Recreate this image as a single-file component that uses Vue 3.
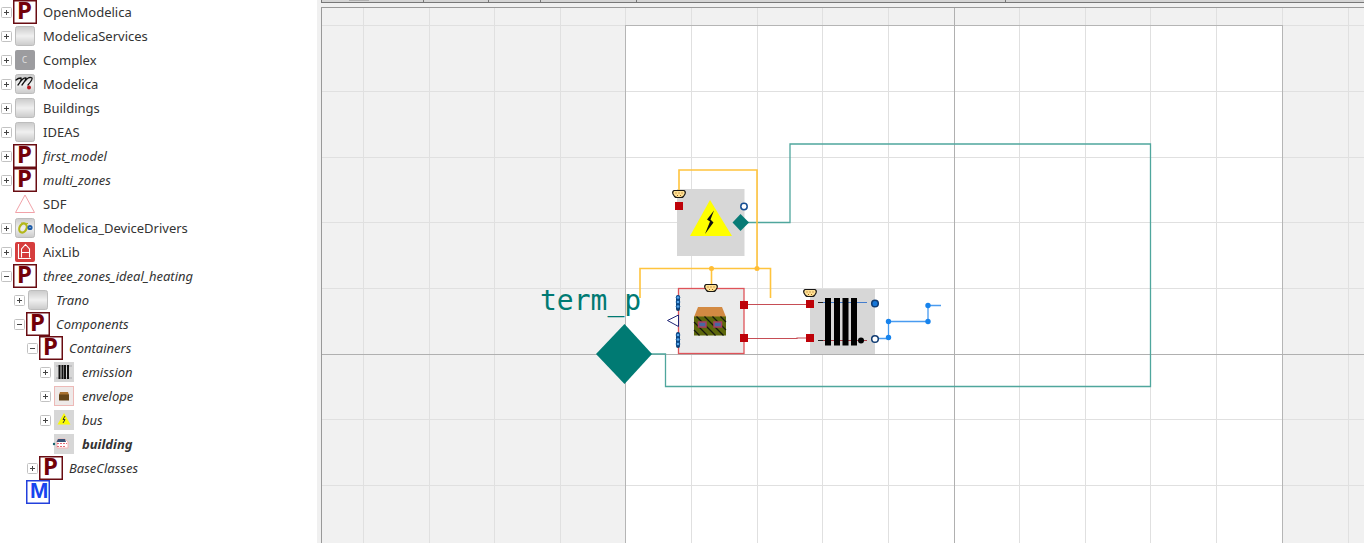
<script setup>
const rows = [
  { label: 'OpenModelica', icon: 'package', level: 0, toggle: '+' },
  { label: 'ModelicaServices', icon: 'plain', level: 0, toggle: '+' },
  { label: 'Complex', icon: 'complex', level: 0, toggle: '+' },
  { label: 'Modelica', icon: 'modelica', level: 0, toggle: '+' },
  { label: 'Buildings', icon: 'plain', level: 0, toggle: '+' },
  { label: 'IDEAS', icon: 'plain', level: 0, toggle: '+' },
  { label: 'first_model', icon: 'package', level: 0, toggle: '+', italic: true },
  { label: 'multi_zones', icon: 'package', level: 0, toggle: '+', italic: true },
  { label: 'SDF', icon: 'sdf', level: 0 },
  { label: 'Modelica_DeviceDrivers', icon: 'drivers', level: 0, toggle: '+' },
  { label: 'AixLib', icon: 'aix', level: 0, toggle: '+' },
  { label: 'three_zones_ideal_heating', icon: 'package', level: 0, toggle: '-', italic: true },
  { label: 'Trano', icon: 'plain', level: 1, toggle: '+', italic: true },
  { label: 'Components', icon: 'package', level: 1, toggle: '-', italic: true },
  { label: 'Containers', icon: 'package', level: 2, toggle: '-', italic: true },
  { label: 'emission', icon: 'emission', level: 3, toggle: '+', italic: true },
  { label: 'envelope', icon: 'envelope', level: 3, toggle: '+', italic: true },
  { label: 'bus', icon: 'bus', level: 3, toggle: '+', italic: true },
  { label: 'building', icon: 'building', level: 3, italic: true, bold: true },
  { label: 'BaseClasses', icon: 'package', level: 2, toggle: '+', italic: true },
  { label: '', icon: 'model', level: 1 },
]

const columns = [363, 429, 494, 560, 625, 691, 757, 822, 888, 954, 1019, 1085, 1150, 1216, 1282, 1348]
const lines = [25, 91, 157, 222, 288, 354, 419, 485]
const beads = [297, 301.5, 306, 334.5, 339, 343.5]
const rounded = ['plain', 'modelica', 'drivers']
</script>

<template>
  <div class="app">
    <nav class="tree" aria-label="Libraries">
      <ul>
        <li v-for="(row, i) in rows" :key="i" :class="['row', 'level-' + row.level]">
          <button v-if="row.toggle" class="toggle" type="button" :aria-label="(row.toggle === '+' ? 'Expand ' : 'Collapse ') + row.label">
            <svg width="11" height="11" viewBox="0 0 11 11">
              <rect x=".5" y=".5" width="10" height="10" rx="1" fill="#fff" stroke="#c2c2c2" />
              <path :d="row.toggle === '+' ? 'M3 5.5H8M5.500 3V8' : 'M3 5.5H8'" stroke="#444" />
            </svg>
          </button>
          <span v-else class="toggle"></span>
          <svg class="icon" width="24" height="24" viewBox="0 0 24 24" aria-hidden="true">
            <defs>
              <linearGradient :id="'shade' + i" x1="0" y1="0" x2="0" y2="1">
                <stop offset="0" stop-color="#cacaca" />
                <stop offset=".5" stop-color="#f0f0f0" />
                <stop offset="1" stop-color="#cacaca" />
              </linearGradient>
            </defs>
            <rect v-if="rounded.includes(row.icon)" x="2.500" y="2.500" width="19" height="19" rx="2" :fill="`url(#shade${i})`" stroke="#bdbdbd" />
            <g v-if="row.icon === 'package'">
              <rect x=".75" y=".75" width="22.500" height="22.500" fill="#fff" stroke="#690c12" stroke-width="1.5" />
              <text class="letter" x="4" y="19" fill="#730008">P</text>
            </g>
            <g v-else-if="row.icon === 'model'">
              <rect x=".75" y=".75" width="22.500" height="22.500" fill="#fff" stroke="#2340dc" stroke-width="1.5" />
              <text class="model-letter" x="4" y="18" fill="#1745ee">M</text>
            </g>
            <g v-else-if="row.icon === 'complex'">
              <rect x="2" y="2" width="20" height="20" rx="2" fill="#9c9c9f" />
              <text class="small-letter" x="9" y="15" fill="#e4e4e4">C</text>
            </g>
            <g v-else-if="row.icon === 'modelica'" fill="none" stroke="#111" stroke-linecap="round">
              <path d="M3 8Q5 6 8 6Q9 8 5 13M7 10Q11 5 13 6Q13 8 9 13M12 9Q16 4 19 6Q20 7 15 13" stroke-width="1.3" />
              <circle cx="16" cy="15.500" r="2" fill="#b6191e" stroke="none" />
            </g>
            <path v-else-if="row.icon === 'sdf'" d="M12 3L21.500 20.500H2.500Z" fill="#fff" stroke="#f1a2a8" />
            <g v-else-if="row.icon === 'drivers'" fill="none">
              <ellipse cx="10" cy="12" rx="3.500" ry="4.800" transform="rotate(25 10 12)" stroke="#b3b719" stroke-width="2.200" />
              <path d="M8 7L15 7.500" stroke="#b3b719" />
              <circle cx="17" cy="11.500" r="1.600" stroke="#1e5ca8" stroke-width="2" />
            </g>
            <g v-else-if="row.icon === 'aix'">
              <rect x="2" y="2" width="20" height="20" rx="2" fill="#d63d3d" />
              <path d="M5.500 4V18.500H18M8.500 17.500V9L12.500 4.500L16.500 9V17.500M8.500 12.500H16.500" fill="none" stroke="#fff" stroke-width="1.100" />
            </g>
            <g v-else-if="row.icon === 'emission'">
              <rect x="2" y="2" width="20" height="20" fill="#d7d7d7" />
              <path d="M4 6H20M4 18H20" stroke="#8b8b91" stroke-width=".6" />
              <path d="M7.500 5V19M10.500 5V19M13 5V19M16 5V19" stroke="#111" stroke-width="2" />
            </g>
            <g v-else-if="row.icon === 'envelope'">
              <rect x="2.500" y="2.500" width="19" height="19" fill="#eee9e8" stroke="#edb9b7" />
              <path d="M8 8H16L17 11H7Z" fill="#a8702f" />
              <rect x="7" y="10.500" width="10" height="6" fill="#654518" />
            </g>
            <g v-else-if="row.icon === 'bus'">
              <rect x="2" y="2" width="20" height="20" fill="#d7d7d7" />
              <path d="M12 5L18.500 16.500H5.500Z" fill="#f9fb05" />
              <path d="M13 8L11 11.500H13L11 15" stroke="#333" fill="none" />
            </g>
            <g v-else-if="row.icon === 'building'">
              <rect x="2" y="2" width="20" height="20" fill="#d7d7d7" />
              <path d="M6 7H13L16 10V16H5V10Z" fill="#fff" stroke="#f5b4b5" />
              <path d="M6 7H13L14 10H4.500Z" fill="#365175" />
              <path d="M5 11.500H15M5 14.500H14" stroke="#e36c79" stroke-dasharray="2 1" />
              <circle cx="2" cy="12" r="1.200" fill="#16626d" />
            </g>
          </svg>
          <a v-if="row.label" href="#" :class="['label', { italic: row.italic, bold: row.bold }]">{{ row.label }}</a>
        </li>
      </ul>
    </nav>

    <main class="workspace">
      <div class="toolbar">
        <span class="tab first"></span><span class="tab second"></span><span class="tab third"></span>
        <span class="tab fourth"></span><span class="tab fifth"></span><span class="tab last"></span>
      </div>
      <div class="canvas">
        <svg class="diagram" role="img" aria-label="building diagram">
          <g transform="translate(-322 -8)">
            <rect x="625" y="25" width="657" height="900" fill="#fff" />
            <g fill="#e0e0e0">
              <rect v-for="x in columns" :key="'c' + x" :x="x" y="8" width="1" height="900" />
              <rect v-for="y in lines" :key="'l' + y" x="322" :y="y" width="2000" height="1" />
            </g>
            <rect x="625.500" y="25.500" width="657" height="900" fill="none" stroke="#b5b5b5" />
            <path d="M954.500 8V900M322 354.500H2322" stroke="#b0b0b0" />

            <path d="M747 222.500H790V144H1150.500V386.500H665.500V354H650" fill="none" stroke="#4fa69d" stroke-width="1.300" />

            <rect x="677" y="189" width="67.500" height="67" fill="#d7d7d7" />
            <path d="M710 200L732 236H690Z" fill="#ff0" />
            <path d="M714 210.500L707 219.500L710 221.500L705 234L713.500 222.500L710.500 219.500Z" fill="#111" />
            <rect x="675" y="202" width="8" height="8" fill="#be0209" />
            <path d="M732.500 222.500L740.500 214L749 222.500L740.500 231Z" fill="#087b76" />
            <circle cx="744" cy="206.500" r="3.200" fill="#fff" stroke="#164e92" stroke-width="1.500" />

            <rect x="678.500" y="288.500" width="65.500" height="65" fill="#ebebeb" stroke="#df5359" stroke-width="1.300" />
            <path d="M678.500 315V326.500L667.500 320.500Z" fill="#fff" stroke="#202575" />
            <rect x="676" y="295" width="4" height="16" rx="2" fill="#0b3d70" />
            <rect x="676" y="332" width="4" height="16" rx="2" fill="#0b3d70" />
            <circle v-for="y in beads" :key="'b' + y" cx="678" :cy="y + .5" r="1.800" fill="#5aa6e8" stroke="#0e4f92" />

            <path d="M698 307H722L726 317H694Z" fill="#d38a43" />
            <rect x="694" y="316.500" width="32" height="19" fill="#5d680c" />
            <path d="M694 330L699.500 335.500M694 322L707.500 335.500M696.500 316.500L715.500 335.500M704.500 316.500L723.500 335.500M712.500 316.500L726 330M720.500 316.500L726 322" stroke="#17180e" stroke-width="1.200" fill="none" />
            <g fill="#4868a0" stroke="#a93f62" stroke-width="1.500">
              <rect x="698.500" y="322" width="7.500" height="5" />
              <rect x="714" y="322" width="7.500" height="5" />
            </g>

            <rect x="810" y="289" width="65" height="65" fill="#d7d7d7" />
            <path d="M818 302.500H867" stroke="#447dcd" />
            <path d="M818 340.500H867" stroke="#a94149" />
            <path d="M818 302.500H823M818 340.500H823" stroke="#222" />
            <path d="M828 298V345.500M837 298V345.500M845.500 298V345.500M854 298V345.500" stroke="#000" stroke-width="6" />
            <circle cx="861" cy="340.500" r="3" fill="#000" />
            <path d="M744 304.500H810M744 338.500H797V338H810" stroke="#c64d55" stroke-width="1.200" fill="none" />
            <g fill="#be0209">
              <rect x="740" y="301" width="8" height="8" /><rect x="740" y="334" width="8" height="8" />
              <rect x="806" y="300" width="8" height="8" /><rect x="806" y="334" width="8" height="8" />
            </g>

            <path d="M679 190V170H757V268.500M640 298V268.500H770.500V298M711.500 268.500V286" fill="none" stroke="#ffc43d" stroke-width="1.600" />
            <g fill="#ffbd35"><circle cx="711.500" cy="268.500" r="2.500" /><circle cx="757" cy="268.500" r="2.500" /></g>

            <g v-for="(p, i) in [[679, 194], [711, 288], [810, 293]]" :key="i" :transform="`translate(${p[0]} ${p[1]})`">
              <path d="M-5 -3.500H5Q7 -2.500 6 0L4.500 2.500Q3.500 3.500 2 3.500H-2Q-3.500 3.500 -4.500 2.500L-6 0Q-7 -2.500 -5 -3.500Z" fill="#ffe093" stroke="#191714" stroke-width="1.200" />
              <path d="M-3.500 -1H-2.500M-.5 -1H.5M2.500 -1H3.500M-2 1.500H-1M1 1.500H2" stroke="#9a5a13" />
            </g>

            <path d="M878 338.500H888.500V321.500H928V305.500H941" fill="none" stroke="#499bf0" stroke-width="1.300" />
            <g fill="#1683ed">
              <circle cx="888.500" cy="321.500" r="2.700" /><circle cx="888.500" cy="337.500" r="2.700" />
              <circle cx="928" cy="321.500" r="2.700" /><circle cx="928" cy="305.500" r="2.700" />
            </g>
            <g stroke="#103b72" stroke-width="1.500">
              <circle cx="875" cy="303.500" r="3.300" fill="#1676d8" /><circle cx="875" cy="339" r="3.300" fill="#fff" />
            </g>

            <text class="term" x="540" y="310">term_p</text>
            <path d="M596 354L624.500 324L652 354L624.500 384Z" fill="#007a73" />
          </g>
        </svg>
      </div>
    </main>
  </div>
</template>

<style>
body { margin: 0; }
</style>

<style scoped>
.app {
  display: grid;
  grid-template-columns: 317px minmax(0, 1fr);
  height: 100vh;
  overflow: hidden;
  background: #f0f0f0;
  font-family: "Noto Sans", "Open Sans", sans-serif;
}
.tree { background: #fff; overflow: hidden; }
ul { margin: 0; padding: 0; list-style: none; }
.row { display: flex; align-items: center; height: 24px; }
.level-1 { padding-left: 13px; }
.level-2 { padding-left: 26px; }
.level-3 { padding-left: 39px; }
.toggle {
  display: flex;
  box-sizing: border-box;
  width: 13px;
  height: 11px;
  padding: 0 1px;
  border: 0;
  background: none;
}
.toggle, .icon { flex: none; }
.icon { display: block; }
.label {
  margin-left: 6px;
  color: #333;
  font-size: 13px;
  line-height: 24px;
  text-decoration: none;
  white-space: nowrap;
}
.italic { font-style: italic; }
.bold { font-weight: 700; }
.letter { font-size: 24px; font-weight: 700; }
.model-letter { font-family: "Liberation Sans", sans-serif; font-size: 22px; font-weight: 700; }
.small-letter { font-size: 8px; }
.workspace {
  display: grid;
  grid-template-rows: 3px minmax(0, 1fr);
  gap: 4px;
  padding-left: 4px;
}
.toolbar {
  display: flex;
  box-sizing: border-box;
  border-bottom: 1px solid #777;
  background: #d5d5d5;
}
.tab { box-sizing: border-box; border-right: 1px solid #777; }
.first {
  width: 103px;
  border-left: 1px solid #777;
  background: linear-gradient(#b0b0b0, #b0b0b0) 27px 0 / 20px 1px no-repeat;
}
.second { width: 65px; }
.third { width: 52px; }
.fourth { width: 96px; }
.fifth { width: 369px; }
.last { flex: 1; border: 0; }
.canvas {
  overflow: hidden;
  border-top: 1px solid #999;
  border-left: 1px solid #999;
  background: #f1f1f1;
}
.diagram { display: block; width: 100%; height: 100%; }
.term { fill: #007a73; font-family: "DejaVu Sans Mono", monospace; font-size: 28px; }
</style>
